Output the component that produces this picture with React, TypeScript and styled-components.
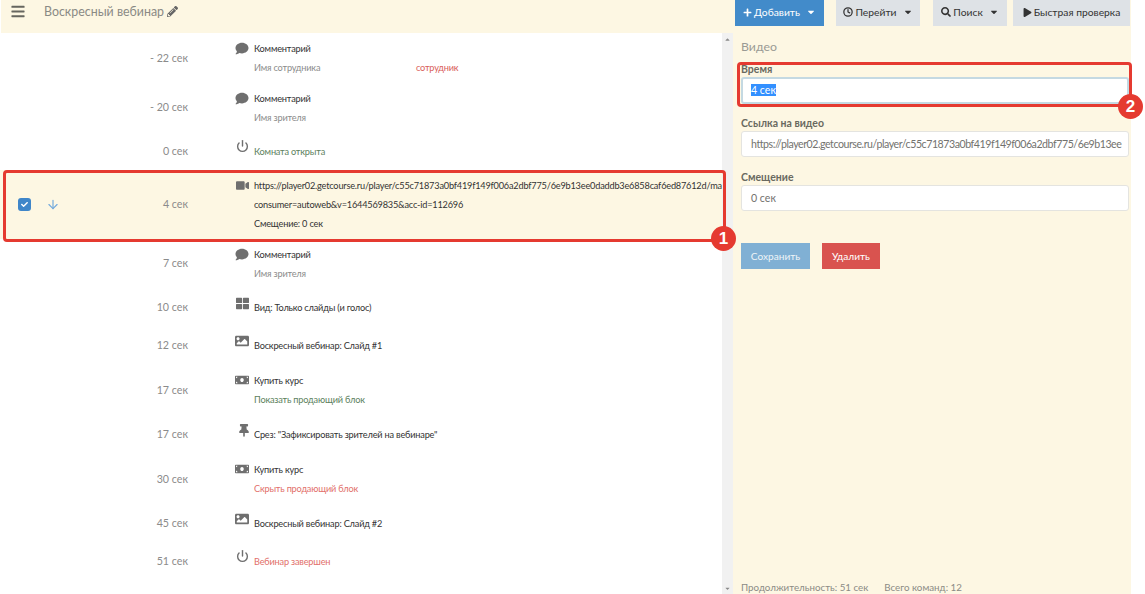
import React from "react";
import styled, { createGlobalStyle } from "styled-components";
import {
  FaBars, FaPencilAlt, FaPlus, FaSearch, FaPlay, FaComment, FaVideo, FaThLarge, FaImage,
  FaMoneyBill, FaThumbtack, FaCheck, FaCaretDown, FaCaretUp,
} from "react-icons/fa";
import { FiPower, FiClock, FiArrowDown } from "react-icons/fi";

const cream = "#fdf7e3";
const red = "#e53a30";

const Global = createGlobalStyle`
  html, body { margin: 0; padding: 0; background: #fff; }
  body { font-family: "Lato", "Roboto", "Liberation Sans", sans-serif; overflow: hidden; }
`;

const Page = styled.div`
  width: 1145px;
  height: 594px;
  overflow: hidden;
  display: flex;
  flex-direction: column;
`;

const TopBar = styled.header`
  width: 1130px;
  margin-left: 1px;
  height: 33px;
  flex: none;
  background: ${cream};
  display: flex;
`;

const TopLeft = styled.div`
  width: 734px;
  display: flex;
  align-items: flex-start;
  padding: 4px 0 0 10px;
  box-sizing: border-box;
`;

const Burger = styled(FaBars)`
  width: 14px;
  height: 15px;
  color: #66665f;
  margin-right: 19px;
`;

const PageTitle = styled.span`
  font-size: 12.4px;
  line-height: 16px;
  color: #8a8a85;
  margin-right: 3px;
`;

const Pencil = styled(FaPencilAlt)`
  width: 11px;
  height: 11px;
  margin-top: 2px;
  color: #666;
`;

const TopButtons = styled.div`
  display: flex;
  align-items: flex-start;
`;

const TopButton = styled.div<{ $w: number; $gap: number; $primary?: boolean }>`
  width: ${(p) => p.$w}px;
  margin-right: ${(p) => p.$gap}px;
  height: 26px;
  padding-bottom: 2px;
  box-sizing: border-box;
  background: ${(p) => (p.$primary ? "#428bca" : "#dee2e6")};
  color: ${(p) => (p.$primary ? "#fff" : "#333")};
  font-size: 10.3px;
  display: flex;
  align-items: center;
  justify-content: center;
  gap: 2px;
  svg { flex: none; }
`;

const Caret = styled(FaCaretDown)`
  width: 10px;
  height: 10px;
  margin-left: 4px;
`;

const Main = styled.div`
  flex: 1;
  display: flex;
  min-height: 0;
`;

const List = styled.div`
  width: 722px;
  flex: none;
  display: flex;
  flex-direction: column;
`;

const Row = styled.div<{ $h: number; $active?: boolean }>`
  position: relative;
  height: ${(p) => p.$h}px;
  flex: none;
  display: flex;
  align-items: center;
  background: ${(p) => (p.$active ? cream : "transparent")};
`;

const Tools = styled.div`
  width: 130px;
  flex: none;
  padding-left: 18px;
  box-sizing: border-box;
  display: flex;
  align-items: center;
  gap: 15px;
`;

const Check = styled.span`
  width: 13px;
  height: 13px;
  border-radius: 3px;
  background: #3f86c9;
  color: #fff;
  display: flex;
  align-items: center;
  justify-content: center;
  svg { width: 7px; height: 7px; }
`;

const DownArrow = styled(FiArrowDown)`
  width: 14px;
  height: 15px;
  stroke-width: 2;
  color: #72a9dc;
`;

const Time = styled.div`
  width: 58px;
  flex: none;
  text-align: right;
  font-size: 10.7px;
  color: #8b8b8b;
  padding-bottom: 2px;
`;

const IconCell = styled.div`
  width: 66px;
  flex: none;
  padding: 9px 0 0 48px;
  box-sizing: border-box;
  align-self: flex-start;
  color: #6f6f6f;
  display: flex;
`;

const Glyph = styled.span<{ $w?: number; $h?: number; $x?: number; $y?: number }>`
  display: flex;
  margin-left: ${(p) => p.$x ?? 0}px;
  margin-top: ${(p) => p.$y ?? 0}px;
  svg { width: ${(p) => p.$w ?? 13}px; height: ${(p) => p.$h ?? 13}px; flex: none; }
`;

const Body = styled.div<{ $top: number }>`
  flex: 1;
  min-width: 0;
  align-self: flex-start;
  padding-top: ${(p) => p.$top}px;
  overflow: hidden;
`;

const Line = styled.div<{ $tone?: string }>`
  height: 19px;
  line-height: 19px;
  font-size: 9.2px;
  letter-spacing: -0.2px;
  white-space: nowrap;
  overflow: hidden;
  color: ${(p) => p.$tone ?? "#333"};
`;

const NameCol = styled.span`
  display: inline-block;
  width: 162px;
`;

const Role = styled.span`
  color: #d9605a;
`;

const Annotation = styled.div<{ $inset: string }>`
  position: absolute;
  inset: ${(p) => p.$inset};
  border: 3px solid ${red};
  border-radius: 4px;
  pointer-events: none;
  z-index: 5;
`;

const Badge = styled.span<{ $right: number; $bottom: number }>`
  position: absolute;
  right: ${(p) => p.$right}px;
  bottom: ${(p) => p.$bottom}px;
  width: 25px;
  height: 25px;
  border-radius: 50%;
  background: ${red};
  color: #fff;
  font-weight: 700;
  font-size: 17px;
  line-height: 25px;
  text-align: center;
  font-family: "Liberation Sans", sans-serif;
`;

const Scrollbar = styled.div`
  width: 11px;
  flex: none;
  background: #f1f1f1;
  color: #8a8a8a;
  display: flex;
  flex-direction: column;
  justify-content: space-between;
  align-items: center;
  padding: 3px 0 2px;
  box-sizing: border-box;
  svg { width: 7px; height: 7px; }
`;

const Panel = styled.aside`
  width: 398px;
  flex: none;
  background: ${cream};
  padding: 5px 2px 0 8px;
  box-sizing: border-box;
  display: flex;
  flex-direction: column;
`;

const PanelTitle = styled.h3`
  margin: 0 0 6px;
  height: 18px;
  line-height: 18px;
  font-size: 12.3px;
  font-weight: 400;
  color: #9a9a94;
`;

const Field = styled.div`
  position: relative;
  margin-bottom: 13px;
`;

const Label = styled.label`
  display: block;
  font-size: 10.5px;
  font-weight: 700;
  color: #69695f;
  height: 15px;
  line-height: 14px;
`;

const InputBox = styled.div<{ $focus?: boolean; $compact?: boolean }>`
  height: ${(p) => (p.$focus ? 27 : 26)}px;
  margin-bottom: ${(p) => (p.$focus ? -1 : 0)}px;
  box-sizing: border-box;
  background: #fff;
  border: ${(p) => (p.$focus ? "2px solid #c4d9e2" : "1px solid #e4e4e0")};
  border-radius: 3px;
  padding: 0 ${(p) => (p.$focus ? 8 : 9)}px;
  font-size: 10.6px;
  letter-spacing: ${(p) => (p.$compact ? "-0.45px" : "0")};
  line-height: ${(p) => (p.$focus ? 23 : 24)}px;
  color: #72726e;
  white-space: nowrap;
  overflow: hidden;
`;

const Selected = styled.span`
  background: #3390ff;
  color: #fff;
`;

const Actions = styled.div`
  display: flex;
  gap: 12px;
  margin-top: 19px;
`;

const ActionBtn = styled.div<{ $w: number; $danger?: boolean }>`
  width: ${(p) => p.$w}px;
  height: 26px;
  background: ${(p) => (p.$danger ? "#d9534f" : "#80b0d4")};
  color: ${(p) => (p.$danger ? "#fff" : "#eef4f7")};
  font-size: 10.1px;
  display: flex;
  align-items: center;
  justify-content: center;
`;

const Footer = styled.div`
  margin-top: auto;
  height: 14px;
  line-height: 14px;
  font-size: 9.75px;
  color: #8b8b85;
  display: flex;
  gap: 16px;
`;

type Tone = "green" | "red" | "grey";
const tones: Record<Tone, string> = { green: "#5d7f5d", red: "#e2706b", grey: "#8c8c8c" };

type Item = {
  time: string;
  icon: React.ReactNode;
  h: number;
  lines: { text: React.ReactNode; tone?: Tone }[];
};

const comment = <Glyph $w={14} $x={-1}><FaComment /></Glyph>;
const power = <Glyph $w={13} $h={14} $y={-2}><FiPower strokeWidth={2.6} /></Glyph>;
const picture = <Glyph $w={14} $h={14} $x={-1} $y={-1}><FaImage /></Glyph>;
const money = <Glyph $w={14} $h={14} $x={-1} $y={-1}><FaMoneyBill /></Glyph>;

const items: Item[] = [
  { time: "- 22 сек", icon: comment, h: 50, lines: [{ text: "Комментарий" }, { text: <><NameCol>Имя сотрудника</NameCol><Role>сотрудник</Role></>, tone: "grey" }] },
  { time: "- 20 сек", icon: comment, h: 49, lines: [{ text: "Комментарий" }, { text: "Имя зрителя", tone: "grey" }] },
  { time: "0 сек", icon: power, h: 38, lines: [{ text: "Комната открыта", tone: "green" }] },
  { time: "4 сек", icon: <Glyph><FaVideo /></Glyph>, h: 69, lines: [{ text: "https://player02.getcourse.ru/player/c55c71873a0bf419f149f006a2dbf775/6e9b13ee0daddb3e6858caf6ed87612d/ma" }, { text: "consumer=autoweb&v=1644569835&acc-id=112696" }, { text: "Смещение: 0 сек" }] },
  { time: "7 сек", icon: comment, h: 49, lines: [{ text: "Комментарий" }, { text: "Имя зрителя", tone: "grey" }] },
  { time: "10 сек", icon: <Glyph><FaThLarge /></Glyph>, h: 38, lines: [{ text: "Вид: Только слайды (и голос)" }] },
  { time: "12 сек", icon: picture, h: 39, lines: [{ text: "Воскресный вебинар: Слайд #1" }] },
  { time: "17 сек", icon: money, h: 50, lines: [{ text: "Купить курс" }, { text: "Показать продающий блок", tone: "green" }] },
  { time: "17 сек", icon: <Glyph $w={10} $h={13} $x={3}><FaThumbtack /></Glyph>, h: 39, lines: [{ text: "Срез: \"Зафиксировать зрителей на вебинаре\"" }] },
  { time: "30 сек", icon: money, h: 50, lines: [{ text: "Купить курс" }, { text: "Скрыть продающий блок", tone: "red" }] },
  { time: "45 сек", icon: picture, h: 38, lines: [{ text: "Воскресный вебинар: Слайд #2" }] },
  { time: "51 сек", icon: power, h: 38, lines: [{ text: "Вебинар завершен", tone: "red" }] },
];

export default function App() {
  return (
    <Page>
      <Global />
      <TopBar>
        <TopLeft>
          <Burger />
          <PageTitle>Воскресный вебинар</PageTitle>
          <Pencil />
        </TopLeft>
        <TopButtons>
          <TopButton $w={89} $gap={12} $primary><FaPlus size={9} />Добавить<Caret /></TopButton>
          <TopButton $w={84} $gap={13}><FiClock size={10} strokeWidth={3} />Перейти<Caret /></TopButton>
          <TopButton $w={74} $gap={6}><FaSearch size={10} />Поиск<Caret /></TopButton>
          <TopButton $w={117} $gap={0}><FaPlay size={9} />Быстрая проверка</TopButton>
        </TopButtons>
      </TopBar>
      <Main>
        <List>
          {items.map((item, i) => {
            const active = i === 3;
            const single = item.lines.length === 1;
            return (
              <Row key={i} $h={item.h} $active={active}>
                <Tools>
                  {active && <Check><FaCheck /></Check>}
                  {active && <DownArrow />}
                </Tools>
                <Time>{item.time}</Time>
                <IconCell>{item.icon}</IconCell>
                <Body $top={single ? 10 : 6}>
                  {item.lines.map((l, j) => (
                    <Line key={j} $tone={l.tone ? tones[l.tone] : undefined}>{l.text}</Line>
                  ))}
                </Body>
                {active && (
                  <Annotation $inset="0 -4px -3px 3px">
                    <Badge $right={-13} $bottom={-12}>1</Badge>
                  </Annotation>
                )}
              </Row>
            );
          })}
        </List>
        <Scrollbar>
          <FaCaretUp />
          <FaCaretDown />
        </Scrollbar>
        <Panel>
          <PanelTitle>Видео</PanelTitle>
          <Field>
            <Label>Время</Label>
            <InputBox $focus><Selected>4 сек</Selected></InputBox>
            <Annotation $inset="0 -3px -4px -4px">
              <Badge $right={-14} $bottom={-15}>2</Badge>
            </Annotation>
          </Field>
          <Field>
            <Label>Ссылка на видео</Label>
            <InputBox $compact>https://player02.getcourse.ru/player/c55c71873a0bf419f149f006a2dbf775/6e9b13ee</InputBox>
          </Field>
          <Field>
            <Label>Смещение</Label>
            <InputBox>0 сек</InputBox>
          </Field>
          <Actions>
            <ActionBtn $w={69}>Сохранить</ActionBtn>
            <ActionBtn $w={58} $danger>Удалить</ActionBtn>
          </Actions>
          <Footer>
            <span>Продолжительность: 51 сек</span>
            <span>Всего команд: 12</span>
          </Footer>
        </Panel>
      </Main>
    </Page>
  );
}
